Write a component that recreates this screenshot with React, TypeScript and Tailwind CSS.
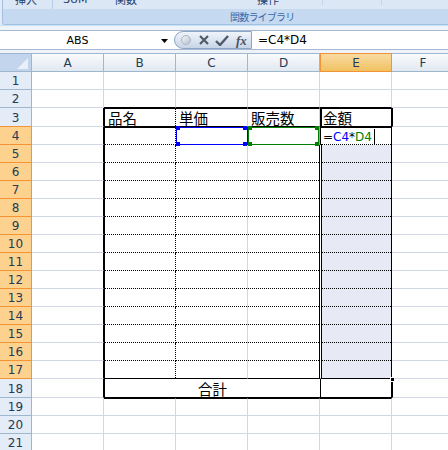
import React from "react";

const HF = " font-['DejaVu_Sans',sans-serif] ";
const JF = " font-['Noto_Sans_CJK_JP',sans-serif] ";

const GR = " border-r border-r-[#d0d7e5] ";
const GB = " border-b border-b-[#d0d7e5] ";
const KR = " border-r border-r-black ";
const KB = " border-b border-b-black ";
const KL = " border-l border-l-black ";
const KT = " border-t border-t-black ";
const KL2 = " border-l-2 border-l-black ";
const WL = " border-l border-l-white ";
const DR = " border-r border-dotted border-black ";
const DB = " border-b border-dotted border-black ";
const DRB = " border-r border-b border-dotted border-black ";
const SHADE = " bg-[#e7eaf5] shadow-[inset_1px_0_0_#000] ";

const TXT = "h-full flex items-end pb-[1px] text-[14.5px] leading-none text-black" + JF;

function Cell({
  w = "w-[72px]",
  o = "",
  i = "",
  children,
  over,
}: {
  w?: string;
  o?: string;
  i?: string;
  children?: React.ReactNode;
  over?: React.ReactNode;
}) {
  return (
    <div className={w + " shrink-0 h-full " + o}>
      <div className={"h-full w-full " + i}>{children}</div>
      {over}
    </div>
  );
}

function RowHead({ n }: { n: number }) {
  const sel = n >= 4 && n <= 17;
  const cls = sel
    ? "bg-[#fdd28e] border-r border-b border-[#f29436]"
    : n === 3
    ? "bg-[#e4ecf7] border-r border-r-[#9eb6ce] border-b border-b-[#f29436]"
    : "bg-[#e4ecf7] border-r border-b border-[#9eb6ce]";
  return (
    <div className={"w-[32px] shrink-0 h-full flex items-center justify-center " + cls}>
      <span className={"text-[12px] leading-none text-[#243b55] mt-[1px]" + HF}>{n}</span>
    </div>
  );
}

function Plain() {
  return (
    <>
      <Cell o={GR + GB} />
      <Cell o={GR + GB} />
      <Cell o={GR + GB} />
      <Cell o={GR + GB} />
      <Cell o={GR + GB} />
      <Cell w="w-[56px]" o={GB} />
    </>
  );
}

function Corners({ color }: { color: string }) {
  return (
    <>
      <div className={"absolute left-0 -top-[2px] w-[4px] h-[4px] " + color} />
      <div className={"absolute left-0 -bottom-px w-[4px] h-[4px] " + color} />
      <div className={"absolute right-0 -top-[2px] w-[4px] h-[4px] " + color} />
      <div className={"absolute right-0 -bottom-px w-[4px] h-[4px] " + color} />
    </>
  );
}

function Row({ n }: { n: number }) {
  const h = n === 3 || n === 18 ? "h-[19px]" : "h-[18px]";
  let cells: React.ReactNode;

  if (n === 2) {
    cells = (
      <>
        <Cell o={GR + GB} />
        <Cell o={GR + KB} />
        <Cell o={GR + KB} />
        <Cell o={GR + KB} />
        <Cell o={GR + KB} />
        <Cell w="w-[56px]" o={GB} />
      </>
    );
  } else if (n === 3) {
    cells = (
      <>
        <Cell o={KR + GB} />
        <Cell o={KL + KT + KB} i={DR}>
          <div className={TXT + " pl-[3px]"}>品名</div>
        </Cell>
        <Cell o={KT + KB + GR}>
          <div className={TXT + " pl-[3px]"}>単価</div>
        </Cell>
        <Cell o={KT + KB + GR}>
          <div className={TXT + " pl-[3px]"}>販売数</div>
        </Cell>
        <Cell o={KL2 + KT + KB + KR}>
          <div className={TXT + " pl-[1px]"}>金額</div>
        </Cell>
        <Cell w="w-[56px]" o={KL + GB} />
      </>
    );
  } else if (n === 4) {
    cells = (
      <>
        <Cell o={KR + GB} />
        <Cell o={KL + KT} i={DRB} />
        <Cell
          o={KT + GR + " relative"}
          i={DB}
          over={
            <>
              <div className="absolute left-0 -right-px -top-px bottom-0 border border-[#0000ff]" />
              <Corners color="bg-[#0000ff]" />
            </>
          }
        />
        <Cell
          o={KT + KR + " relative"}
          i={DB}
          over={
            <>
              <div className="absolute inset-x-0 -top-px bottom-0 border border-[#008000]" />
              <Corners color="bg-[#008000]" />
              <div className="absolute -right-px -top-px bottom-0 w-px bg-[#ff66cc]" />
            </>
          }
        />
        <Cell o={KL + KT + KR} i={DB + " bg-white"}>
          <div className={"h-full flex items-end pb-[1px] pl-[2px] text-[12px] leading-none text-black" + HF}>
            <span>=</span>
            <span className="text-[#0000ff]">C4</span>
            <span>*</span>
            <span className="text-[#008000]">D4</span>
            <span className="inline-block w-px h-[15px] bg-black ml-[2px] -mb-[1px]" />
          </div>
        </Cell>
        <Cell w="w-[56px]" o={GB} />
      </>
    );
  } else if (n >= 5 && n <= 16) {
    cells = (
      <>
        <Cell o={KR + GB} />
        <Cell o={KL} i={DRB} />
        <Cell o={GR} i={DB} />
        <Cell o={KR} i={DB} />
        <Cell o={WL + KR} i={DB + SHADE} />
        <Cell w="w-[56px]" o={GB} />
      </>
    );
  } else if (n === 17) {
    cells = (
      <>
        <Cell o={KR + GB} />
        <Cell o={KL + KB} i={DR} />
        <Cell o={GR + KB} />
        <Cell o={KR + KB} />
        <Cell
          o={WL + KR + KB + " relative"}
          i={SHADE}
          over={
            <div className="absolute -right-[4px] -bottom-[4px] w-[5px] h-[5px] bg-black border border-white" />
          }
        />
        <Cell w="w-[56px]" o={GB} />
      </>
    );
  } else if (n === 18) {
    cells = (
      <>
        <Cell o={KR + GB} />
        <Cell w="w-[216px]" o={KL + KB}>
          <div className={TXT + " justify-center"}>合計</div>
        </Cell>
        <Cell o={KL + KR + KB} />
        <Cell w="w-[56px]" o={KL + GB} />
      </>
    );
  } else if (n === 19) {
    cells = (
      <>
        <Cell o={GR + GB} />
        <Cell o={KT + GR + GB} />
        <Cell o={KT + GR + GB} />
        <Cell o={KT + GR + GB} />
        <Cell o={KT + GR + GB} />
        <Cell w="w-[56px]" o={GB} />
      </>
    );
  } else {
    cells = <Plain />;
  }

  return (
    <div className={"flex " + h}>
      <RowHead n={n} />
      {cells}
    </div>
  );
}

function ColHeaders() {
  const norm =
    "w-[72px] shrink-0 h-full flex items-center justify-center border-t border-b border-r border-[#9eb6ce] bg-linear-to-b from-[#f9fbfd] to-[#e1e8f1]";
  const txt = "text-[12px] leading-none text-[#243b55] mt-[1px]" + HF;
  return (
    <div className="flex h-[19px]">
      <div className="w-[32px] shrink-0 h-full border-t border-b border-r border-[#9eb6ce] bg-[#c3d5ec]">
        <svg width="31" height="17" viewBox="0 0 31 17" className="block">
          <polygon points="28,4 28,15 17,15" fill="#eaf0f8" />
        </svg>
      </div>
      <div className={norm}>
        <span className={txt}>A</span>
      </div>
      <div className={norm}>
        <span className={txt}>B</span>
      </div>
      <div className={norm}>
        <span className={txt}>C</span>
      </div>
      <div className={norm}>
        <span className={txt}>D</span>
      </div>
      <div className="w-[72px] shrink-0 h-full flex items-center justify-center border border-[#f29436] bg-linear-to-b from-[#f9dba2] to-[#f1c15f]">
        <span className={txt}>E</span>
      </div>
      <div className="w-[56px] shrink-0 h-full flex items-center justify-center border-t border-b border-[#9eb6ce] bg-linear-to-b from-[#f9fbfd] to-[#e1e8f1]">
        <span className={txt + " ml-[6px]"}>F</span>
      </div>
    </div>
  );
}

function Ribbon() {
  const top = "shrink-0 -mt-[6px] text-[11px] leading-none text-[#1e3f6e]";
  return (
    <div className="h-[25px] bg-[#e1eaf6] pl-[2px]">
      <div className="h-full flex flex-col border-l border-b border-[#a3bfe2] rounded-bl-[3px] overflow-hidden">
        <div className="h-[9px] shrink-0 bg-[#dce7f5] flex items-start overflow-hidden">
          <div className="w-[12px] shrink-0" />
          <span className={"w-[22px] " + top + JF}>挿入</span>
          <div className="w-[15px] shrink-0" />
          <div className="w-px h-full shrink-0 bg-[#b7cce6]" />
          <div className="w-[10px] shrink-0" />
          <span className={"w-[22px] text-[10px] " + top + HF}>SUM</span>
          <div className="w-[30px] shrink-0" />
          <span className={"w-[22px] " + top + JF}>関数</span>
          <div className="w-[120px] shrink-0" />
          <span className={"w-[31px] " + top + JF}>操作</span>
          <div className="w-[34px] shrink-0" />
          <div className="w-px h-[5px] shrink-0 bg-[#c2d4ea]" />
          <div className="w-[58px] shrink-0" />
          <div className="w-px h-[5px] shrink-0 bg-[#c2d4ea]" />
        </div>
        <div className="flex-1 bg-[#c5d9f1] flex items-center pl-[227px]">
          <span className={"text-[10px] tracking-[-0.8px] leading-none text-[#3d68a6] mt-[1px]" + JF}>
            関数ライブラリ
          </span>
        </div>
      </div>
    </div>
  );
}

function FormulaBar() {
  return (
    <div className="h-[20px] flex border-t border-b border-[#a5b9d2] bg-white">
      <div className="w-[174px] shrink-0 h-full flex items-center">
        <div className={"w-[155px] text-center text-[11px] leading-none text-black" + HF}>ABS</div>
        <svg width="7" height="4" viewBox="0 0 7 4" className="ml-[6px] mt-[2px]">
          <polygon points="0,0 7,0 3.5,4" fill="#000" />
        </svg>
      </div>
      <div className="w-[78px] shrink-0 h-full rounded-l-full border border-[#8ea6c6] bg-linear-to-b from-[#f0f4fa] to-[#c8d5e7] flex items-center">
        <div className="ml-[6px] w-[10px] h-[10px] rounded-full border border-[#aab4c2] bg-linear-to-br from-[#f4f6f9] to-[#b9c2cf]" />
        <svg width="10" height="10" viewBox="0 0 10 10" className="ml-[8px]">
          <path d="M1 1 L9 9 M9 1 L1 9" stroke="#4f5a69" strokeWidth="2.2" fill="none" />
        </svg>
        <svg width="14" height="11" viewBox="0 0 14 11" className="ml-[6px]">
          <path d="M1 6 L5 10 L13 1" stroke="#4f5a69" strokeWidth="2.4" fill="none" />
        </svg>
        <span className="ml-[7px] text-[13px] leading-none italic font-bold text-[#4a5463] font-['Liberation_Serif',serif]">
          fx
        </span>
      </div>
      <div className={"flex-1 h-full flex items-center pl-[6px] text-[12px] leading-none text-black" + HF}>
        =C4*D4
      </div>
    </div>
  );
}

const ROWS = Array.from({ length: 21 }, (_, k) => k + 1);

export default function App() {
  return (
    <div className="w-[448px] h-[450px] overflow-hidden bg-white">
      <Ribbon />
      <div className="h-px bg-[#c3e4f6]" />
      <div className="h-[4px] bg-[#eef3fa]" />
      <FormulaBar />
      <div className="h-[3px] bg-[#eef3f9]" />
      <ColHeaders />
      {ROWS.map((n) => (
        <Row key={n} n={n} />
      ))}
    </div>
  );
}
